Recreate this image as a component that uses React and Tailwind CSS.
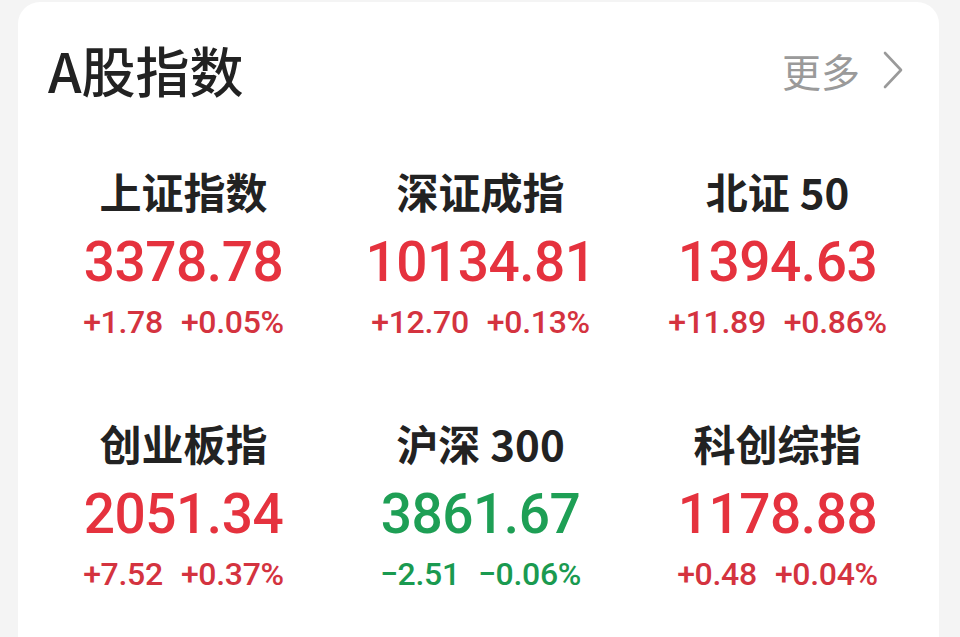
import React from "react";

// A-share index card: header + 3x2 grid of index quotes

const INDICES = [
  { name: "上证指数", value: "3378.78", change: "+1.78", pct: "+0.05%", up: true },
  { name: "深证成指", value: "10134.81", change: "+12.70", pct: "+0.13%", up: true },
  { name: "北证", num: "50", value: "1394.63", change: "+11.89", pct: "+0.86%", up: true },
  { name: "创业板指", value: "2051.34", change: "+7.52", pct: "+0.37%", up: true },
  { name: "沪深", num: "300", value: "3861.67", change: "−2.51", pct: "−0.06%", up: false },
  { name: "科创综指", value: "1178.88", change: "+0.48", pct: "+0.04%", up: true },
];

const CJK = { fontFamily: '"Noto Sans CJK SC", "Noto Sans", sans-serif' };
const NUM = { fontFamily: 'Roboto, "Noto Sans", sans-serif' };

function IndexCell({ item }) {
  const valueColor = item.up ? "text-[#e5323e]" : "text-[#1e9f55]";
  const changeColor = item.up ? "text-[#d4333f]" : "text-[#1a9a50]";

  return (
    <div className="flex flex-col items-center">
      <div
        className="h-[48px] flex items-center text-[42px] font-bold text-[#222] leading-none"
        style={CJK}
      >
        {item.name}
        {item.num && <span className="ml-[10px]">{item.num}</span>}
      </div>
      <div
        className={`mt-[17px] h-[60px] flex items-center text-[55px] font-medium tracking-[-0.5px] leading-none ${valueColor}`}
        style={NUM}
      >
        {item.value}
      </div>
      <div
        className={`mt-[10px] h-[40px] flex items-center gap-[18px] text-[32px] font-medium tracking-[-0.3px] leading-none ${changeColor}`}
        style={NUM}
      >
        <span>{item.change}</span>
        <span>{item.pct}</span>
      </div>
    </div>
  );
}

export default function App() {
  return (
    <div className="w-[960px] h-[637px] overflow-hidden bg-[#f4f4f4] pl-[18px] pr-[21px] pt-[2px]">
      <div className="bg-white rounded-[22px] h-[680px] pt-[28px] pl-[17px] pr-[13px]">
        {/* Header */}
        <div className="h-[80px] flex items-center justify-between pl-[13px] pr-[22px]">
          <h2 className="text-[54px] font-medium text-[#222] leading-none" style={CJK}>
            A股指数
          </h2>
          <div className="flex items-center gap-[22px] text-[#9a9a9a]" style={CJK}>
            <span className="text-[39px] leading-none">更多</span>
            <svg width="22" height="38" viewBox="0 0 22 38" fill="none">
              <polyline
                points="3,2 19,19 3,36"
                stroke="#9a9a9a"
                strokeWidth="2.6"
                strokeLinecap="round"
                strokeLinejoin="round"
              />
            </svg>
          </div>
        </div>

        {/* Index grid */}
        <div className="grid grid-cols-3 mt-[57px] gap-y-[77px]">
          {INDICES.map((item) => (
            <IndexCell key={item.name + (item.num || "")} item={item} />
          ))}
        </div>
      </div>
    </div>
  );
}
